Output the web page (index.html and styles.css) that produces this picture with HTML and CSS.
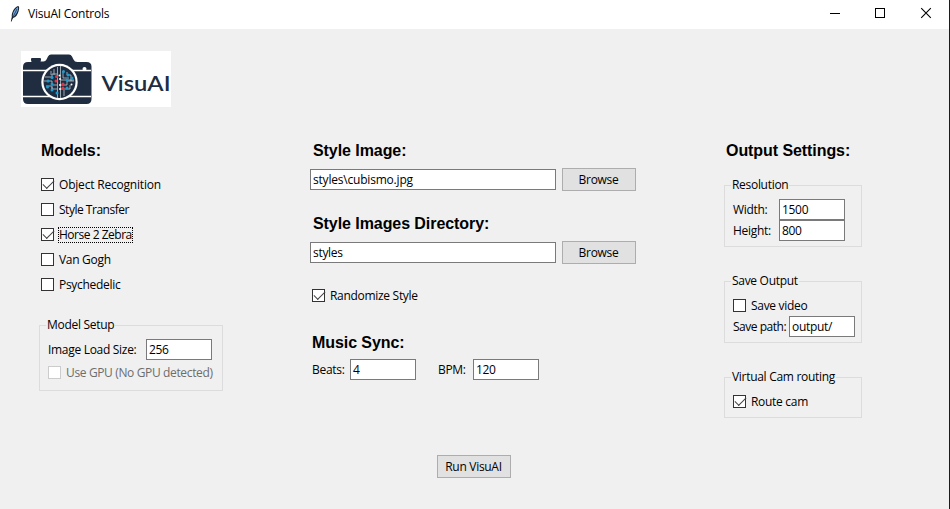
FILE: index.html
```html
<!DOCTYPE html>
<html lang="en">
<head>
<meta charset="utf-8">
<title>VisuAI Controls</title>
<link rel="stylesheet" href="styles.css">
</head>
<body>
<div class="window">
  <header class="titlebar">
    <svg class="feather" width="12" height="18" viewBox="0 0 12 18">
      <path d="M1.800 16.500 2.800 12C2.300 8 5 2.500 9 1c1.600.2 1.300 3 .6 5.200C8.600 10 6.500 12.600 3.900 13L2.600 16.500Z" fill="#16212e"/>
      <path d="M3.700 11.500C3.500 8 6 3.500 9 2c.6 2-.6 5-2 7S4.700 12 3.700 11.500Z" fill="#6ba8e6"/>
      <path d="M3 14 8 4" stroke="#16212e" stroke-width=".7"/>
    </svg>
    <span class="title">VisuAI Controls</span>
    <svg class="controls" width="106" height="13" viewBox="0 0 106 13" fill="none" stroke="#000" stroke-width="1">
      <path d="M1 6.500h10M46.500 1.500h9v9h-9z" shape-rendering="crispEdges"/>
      <path d="M92.200 1.200l9.600 9.600M101.800 1.200l-9.600 9.600" stroke-width="1.100"/>
    </svg>
  </header>

  <svg class="logo" width="150" height="56" viewBox="0 0 150 56">
    <rect width="150" height="56" fill="#fff"/>
    <path d="M10 9V8q0-1 1-1h8q1 0 1 1v1l-.5 1.500h3q2 0 3-2l1.500-3q1-2 3-2h18q2 0 3 2l1.500 3q1 2.500 4 2.500h9q5 0 5 4.500V48q0 5-5 5H7q-5 0-5-5V16q0-5 5-5h3.500Z" fill="#202d41"/>
    <path d="M2 19.500h68M2 45.500h68" stroke="#fff" stroke-width="1.300"/>
    <circle cx="38.500" cy="31" r="18.200" fill="#fff"/>
    <circle cx="38.500" cy="31" r="16" fill="#202d41"/>
    <circle cx="63.500" cy="18" r="2" fill="#fff"/>
    <g fill="none" stroke="#b9c4cc" stroke-width=".8">
      <path d="M36.500 16v31M39.500 15v32M24 26h7v-3h5M23 30h8v4h5M25 35h6v3h5M31 40v-4M42 20v7h6M40 29h13M40 34h6v-4h7M40 38h9v-4M43 45v-6M46 21v3h4v6M30 20v4M33 18v6"/>
    </g>
    <g fill="#169ed2">
      <circle cx="42.500" cy="20.500" r="1.500"/><circle cx="31" cy="26.500" r="1.500"/><circle cx="27" cy="30" r="1.500"/><circle cx="31" cy="33" r="1.500"/><circle cx="26.500" cy="36" r="1.500"/><circle cx="31" cy="39" r="1.500"/><circle cx="36" cy="42" r="1.500"/><circle cx="47" cy="24" r="1.500"/><circle cx="51" cy="27" r="1.500"/><circle cx="46" cy="29" r="1.500"/><circle cx="46" cy="37" r="1.500"/>
    </g>
    <g fill="#e83340">
      <circle cx="35.500" cy="25.500" r="1.500"/><circle cx="35" cy="30" r="1.500"/><circle cx="42" cy="33" r="1.500"/><circle cx="42" cy="37" r="1.500"/>
    </g>
    <g fill="#fff">
      <circle cx="38.500" cy="24.500" r="1"/><circle cx="39" cy="28" r="1"/><circle cx="39" cy="34" r="1"/><circle cx="39" cy="38" r="1"/><circle cx="50.500" cy="33.500" r="1"/>
    </g>
    <text class="logo-text" x="80.500" y="40" textLength="69" lengthAdjust="spacingAndGlyphs">VisuAI</text>
  </svg>

  <main class="columns">
    <section class="col models">
      <h2>Models:</h2>
      <div class="checks">
        <label class="check"><i class="box on"></i><span class="loose">Object Recognition</span></label>
        <label class="check"><i class="box"></i><span class="tight">Style Transfer</span></label>
        <label class="check"><i class="box on"></i><span class="focus tight">Horse 2 Zebra</span></label>
        <label class="check"><i class="box"></i><span>Van Gogh</span></label>
        <label class="check"><i class="box"></i><span>Psychedelic</span></label>
      </div>
      <fieldset class="setup">
        <legend>Model Setup</legend>
        <div class="field"><span class="size-label">Image Load Size:</span><div class="entry">256</div></div>
        <label class="check disabled"><i class="box"></i><span>Use GPU (No GPU detected)</span></label>
      </fieldset>
    </section>

    <section class="col style">
      <h2>Style Image:</h2>
      <div class="file"><div class="entry loose">styles\cubismo.jpg</div><button class="btn">Browse</button></div>
      <h2 class="dir-title">Style Images Directory:</h2>
      <div class="file"><div class="entry">styles</div><button class="btn">Browse</button></div>
      <label class="check random"><i class="box on"></i><span>Randomize Style</span></label>
      <h2 class="music-title">Music Sync:</h2>
      <div class="music">
        <span class="beats-label">Beats:</span><div class="entry">4</div>
        <span class="bpm-label">BPM:</span><div class="entry">120</div>
      </div>
    </section>

    <section class="col output">
      <h2>Output Settings:</h2>
      <fieldset class="resolution">
        <legend>Resolution</legend>
        <div class="field"><span class="dim-label">Width:</span><div class="entry">1500</div></div>
        <div class="field"><span class="dim-label">Height:</span><div class="entry">800</div></div>
      </fieldset>
      <fieldset class="save">
        <legend>Save Output</legend>
        <label class="check"><i class="box"></i><span>Save video</span></label>
        <div class="field"><span class="path-label tight">Save path:</span><div class="entry">output/</div></div>
      </fieldset>
      <fieldset class="cam">
        <legend>Virtual Cam routing</legend>
        <label class="check"><i class="box on"></i><span>Route cam</span></label>
      </fieldset>
    </section>
  </main>
  <footer><button class="btn">Run VisuAI</button></footer>
</div>
</body>
</html>
```
FILE: styles.css
```css
* { box-sizing: border-box; }
body {
  margin: 0;
  font: 12px/16px "Open Sans", "Noto Sans", sans-serif;
  letter-spacing: -0.3px;
  color: #000;
  overflow: hidden;
}
.window {
  width: 950px;
  height: 509px;
  background: #f0f0f0;
  border-right: 1px solid #1c1c1c;
  display: flex;
  flex-direction: column;
  white-space: nowrap;
}
.titlebar {
  height: 29px;
  flex: none;
  background: #fff;
  display: flex;
  align-items: center;
  padding: 0 14px 2px 9px;
}
.title { margin-left: 7px; flex: 1; letter-spacing: -0.22px; }
.logo { margin: 22px 0 0 21px; flex: none; }
.logo-text { font: 600 21px Lato, sans-serif; fill: #202d41; letter-spacing: 0; }
.columns {
  display: grid;
  grid-template-columns: 271px 414px 138px;
  padding: 34px 0 0 39px;
  height: 348px;
  flex: none;
}
h2 {
  margin: 0 0 0 2px;
  font: bold 16px/20px "Liberation Sans", Arial, sans-serif;
  letter-spacing: -0.07px;
}
.checks { margin: 11px 0 0 2px; }
.check { display: flex; align-items: center; gap: 4px; height: 25px; }
.check span { padding: 0 1px; }
.loose { letter-spacing: -0.2px; }
.tight { letter-spacing: -0.48px; }
.box {
  width: 13px;
  height: 13px;
  flex: none;
  border: 1px solid #333;
  background: #fff;
}
.box.on::after {
  content: "";
  display: block;
  width: 10px;
  height: 5px;
  margin: 1px 0 0 1px;
  border: solid #444;
  border-width: 0 0 1.5px 1.5px;
  transform: rotate(-45deg);
}
.focus { outline: 1px dotted #000; outline-offset: -1px; }
.disabled { color: #6d6d6d; letter-spacing: -0.36px; }
.disabled .box { border-color: #ccc; }
fieldset {
  border: 1px solid #dcdcdc;
  margin: 0;
  padding: 0 0 0 8px;
  min-width: 0;
}
legend { padding: 0 1px; margin-left: -2px; height: 16px; }
.field { display: flex; align-items: center; height: 21px; }
.entry {
  width: 66px;
  height: 21px;
  border: 1px solid #7a7a7a;
  background: #fff;
  padding: 1px 2px 0 2px;
  line-height: 18px;
}
.btn {
  width: 74px;
  height: 23px;
  padding: 0 1px 0 0;
  border: 1px solid #adadad;
  background: #e1e1e1;
  font: inherit;
  letter-spacing: inherit;
  color: inherit;
}
.setup { width: 184px; height: 74px; margin-top: 20px; }
.setup .field { margin-top: 6px; }
.size-label { width: 98px; }
.setup .check { height: 13px; margin-top: 6px; }
.style h2 { margin-left: 3px; }
.file { display: flex; align-items: center; gap: 6px; margin-top: 7px; }
.file .entry { width: 246px; }
.style .dir-title { margin-top: 23px; }
.random { margin: 19px 0 0 2px; }
.style .music-title { margin: 25px 0 0 2px; }
.music { display: flex; align-items: center; margin: 6px 0 0 2px; }
.beats-label { width: 38px; }
.bpm-label { width: 35px; margin-left: 22px; }
.resolution { height: 70px; margin-top: 16px; }
.resolution .field:first-of-type { margin-top: 6px; }
.dim-label { width: 46px; }
.save { height: 70px; margin-top: 26px; }
.save .check { height: 13px; margin-top: 10px; }
.save .field { margin-top: 4px; }
.path-label { width: 56px; }
.cam { height: 49px; margin-top: 26px; }
.cam .check { height: 13px; margin-top: 10px; }
footer { padding-left: 437px; margin-top: 0; }
```
